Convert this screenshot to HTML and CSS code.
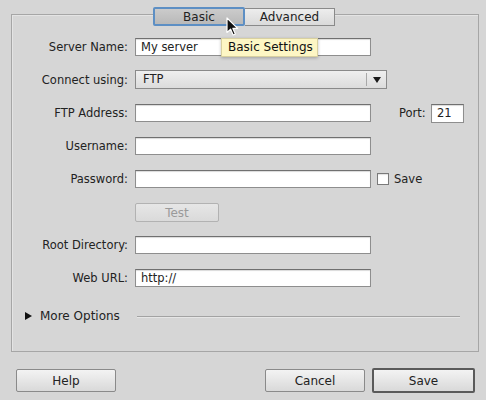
FILE: index.html
```html
<!DOCTYPE html>
<html>
<head>
<meta charset="utf-8">
<link rel="stylesheet" href="styles.css">
</head>
<body>
<div class="dialog">
  <div class="tabs">
    <div class="tab active">Basic</div>
    <div class="tab">Advanced</div>
  </div>
  <div class="panel">
    <div class="form">
      <label class="lbl">Server Name:</label>
      <div class="field"><div class="input">My server</div></div>

      <label class="lbl">Connect using:</label>
      <div class="field"><div class="select"><span class="sel-text">FTP</span><span class="sel-arrow"><i></i></span></div></div>

      <label class="lbl">FTP Address:</label>
      <div class="field"><div class="input"></div><span class="port-lbl">Port:</span><div class="input port">21</div></div>

      <label class="lbl">Username:</label>
      <div class="field"><div class="input"></div></div>

      <label class="lbl">Password:</label>
      <div class="field"><div class="input"></div><span class="check"></span><span class="check-lbl">Save</span></div>

      <span class="lbl"></span>
      <div class="field"><div class="btn test">Test</div></div>

      <label class="lbl">Root Directory:</label>
      <div class="field"><div class="input"></div></div>

      <label class="lbl">Web URL:</label>
      <div class="field"><div class="input">http://</div></div>
    </div>
    <div class="more">
      <div class="more-toggle"><span class="tri"></span><span>More Options</span></div>
      <div class="rule"></div>
    </div>
  </div>
  <div class="footer">
    <div class="btn help">Help</div>
    <div class="spacer"></div>
    <div class="btn cancel">Cancel</div>
    <div class="btn save">Save</div>
  </div>
  <div class="tooltip">Basic Settings</div>
  <svg class="cursor" width="14" height="20" viewBox="0 0 14 20"><path d="M1 1 L1 15.5 L4.6 12.2 L7.2 18 L9.4 17 L6.9 11.4 L11.6 11.4 Z" fill="#111" stroke="#fff" stroke-width="1.2" stroke-linejoin="round"/></svg>
</div>
</body>
</html>
```
FILE: styles.css
```css
body {
  margin: 0;
  background: #d6d6d6;
  font-family: "DejaVu Sans", sans-serif;
  font-size: 11.5px;
  color: #222;
}
.dialog {
  position: relative;
  width: 486px;
  height: 400px;
  padding-top: 7px;
  box-sizing: border-box;
}
.tabs {
  position: relative;
  z-index: 2;
  display: flex;
  padding-left: 153px;
}
.tab {
  height: 19px;
  box-sizing: border-box;
  display: flex;
  align-items: center;
  justify-content: center;
  font-size: 12px;
}
.tab.active {
  width: 92px;
  border: 2px solid #5d8fc4;
  border-radius: 2px;
  background: linear-gradient(#cbcbcb, #b9b9b9);
}
.tab:not(.active) {
  width: 90px;
  border: 1px solid #8a8a8a;
  border-left: none;
  background: linear-gradient(#ededed, #dadada);
  margin-top: 1px;
  height: 18px;
}
.panel {
  margin: -12px 7px 0 11px;
  height: 338px;
  box-sizing: border-box;
  border: 1px solid #a6a6a6;
  box-shadow: inset 1px 1px 0 #e4e4e4;
}
.form {
  display: grid;
  grid-template-columns: 116px 1fr;
  column-gap: 7px;
  row-gap: 15px;
  grid-auto-rows: 18px;
  padding-top: 23px;
}
.lbl {
  text-align: right;
  line-height: 18px;
  white-space: nowrap;
}
.field {
  display: flex;
  align-items: center;
  height: 18px;
}
.input {
  width: 236px;
  height: 18px;
  box-sizing: border-box;
  background: #fff;
  border: 1px solid #8e8e8e;
  border-top-color: #707070;
  box-shadow: inset 0 1px 1px rgba(0,0,0,0.15);
  padding-left: 5px;
  line-height: 16px;
  font-size: 11.5px;
}
.port-lbl {
  margin-left: 28px;
  width: 29px;
}
.input.port {
  width: 33px;
  height: 19px;
  margin-left: 3px;
  padding-left: 5px;
}
.select {
  width: 252px;
  height: 19px;
  margin-top: -1px;
  box-sizing: border-box;
  display: flex;
  border: 1px solid #8a8a8a;
  background: linear-gradient(#efefef, #dcdcdc);
}
.sel-text {
  flex: 1;
  padding-left: 7px;
  line-height: 17px;
}
.sel-arrow {
  width: 19px;
  border-left: 1px solid #a8a8a8;
  margin: 2px 0;
  display: flex;
  align-items: center;
  justify-content: center;
}
.sel-arrow i {
  display: block;
  width: 0;
  height: 0;
  border-left: 4px solid transparent;
  border-right: 4px solid transparent;
  border-top: 6px solid #1a1a1a;
}
.check {
  width: 12px;
  height: 12px;
  box-sizing: border-box;
  margin-left: 6px;
  background: #fff;
  border: 1px solid #7a7a7a;
  box-shadow: inset 0 1px 1px rgba(0,0,0,0.12);
}
.check-lbl {
  margin-left: 5px;
}
.btn {
  display: flex;
  align-items: center;
  justify-content: center;
  box-sizing: border-box;
  border: 1px solid #8a8a8a;
  border-radius: 2px;
  background: linear-gradient(#f3f3f3, #d9d9d9);
  font-size: 12px;
}
.btn.test {
  width: 84px;
  height: 19px;
  margin-top: 1px;
  border-color: #b2b2b2;
  background: linear-gradient(#e6e6e6, #dadada);
  color: #9a9a9a;
}
.more {
  display: grid;
  grid-template-columns: 116px 1fr;
  column-gap: 7px;
  margin-top: 21px;
  height: 16px;
  align-items: center;
}
.more-toggle {
  display: flex;
  align-items: center;
  padding-left: 13px;
  font-size: 12px;
}
.tri {
  width: 0;
  height: 0;
  border-top: 4px solid transparent;
  border-bottom: 4px solid transparent;
  border-left: 7px solid #111;
  margin-right: 8px;
}
.rule {
  height: 1px;
  background: #a3a3a3;
  box-shadow: 0 1px 0 #e6e6e6;
  margin: 0 18px 0 2px;
}
.footer {
  display: flex;
  margin-top: 16px;
  padding: 0 11px 0 16px;
  align-items: center;
}
.spacer { flex: 1; }
.btn.help, .btn.cancel {
  width: 100px;
  height: 23px;
}
.btn.save {
  width: 103px;
  height: 25px;
  margin-left: 7px;
  border: 2px solid #5a5a5a;
}
.tooltip {
  position: absolute;
  left: 221px;
  top: 38px;
  width: 97px;
  height: 19px;
  box-sizing: border-box;
  background: #fdf6c4;
  border: 1px solid #d8d0a0;
  box-shadow: 0 1px 3px rgba(0,0,0,0.25);
  font-size: 12px;
  line-height: 17px;
  padding-left: 6px;
  color: #111;
  z-index: 3;
}
.cursor {
  position: absolute;
  left: 226px;
  top: 17px;
  z-index: 4;
}
```
